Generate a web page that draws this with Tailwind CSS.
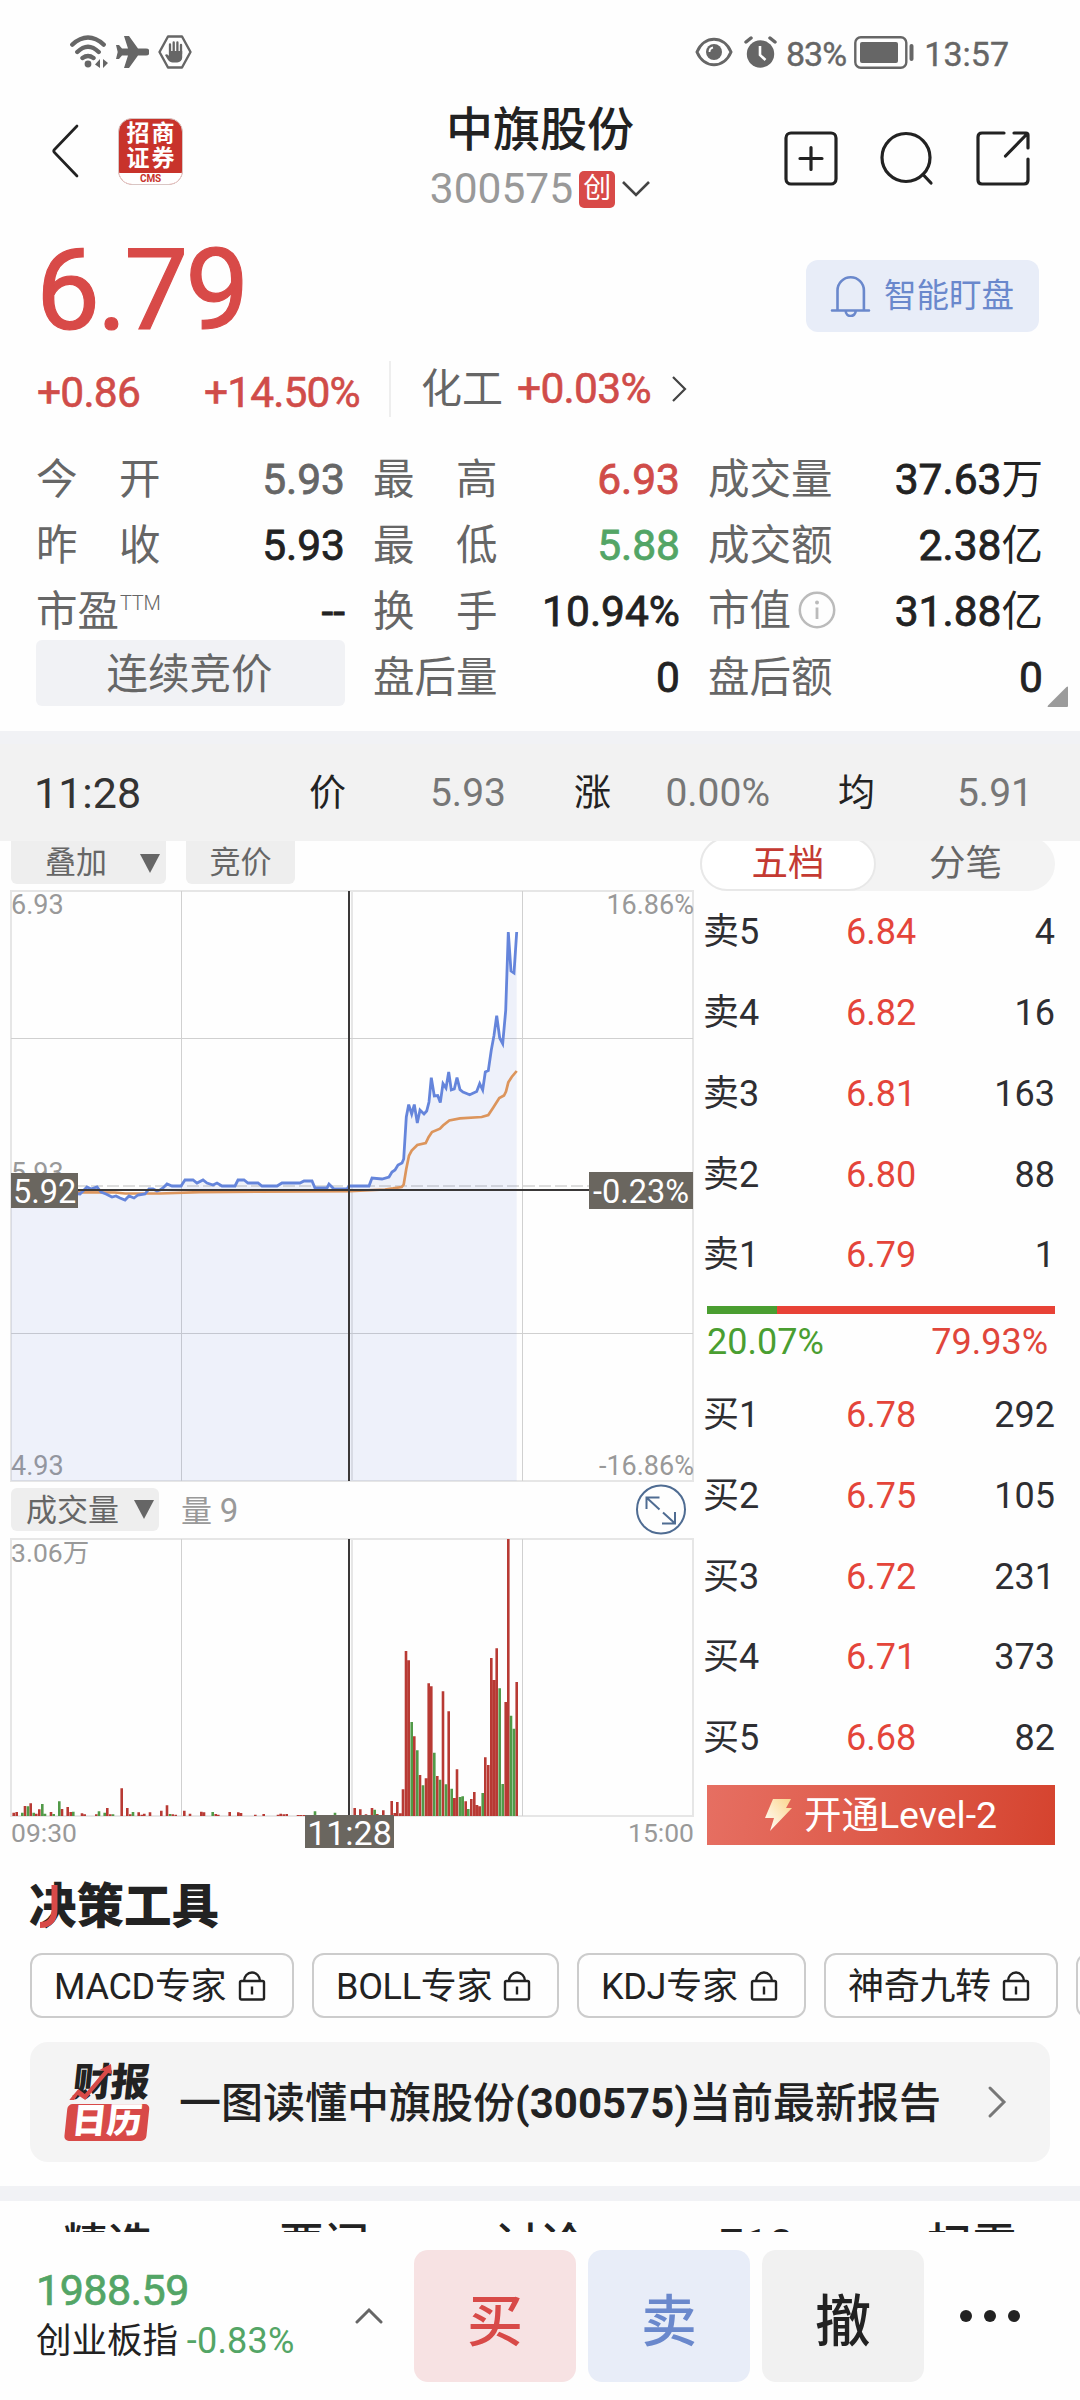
<!DOCTYPE html>
<html lang="zh-CN">
<head>
<meta charset="utf-8">
<title>中旗股份 300575</title>
<script src="https://cdn.jsdelivr.net/npm/@tailwindcss/browser@4"></script>
</head>
<body class="w-[1080px] h-[2400px] overflow-hidden bg-[#fefefe] text-[#222] flex flex-col [font-family:Roboto,'Noto_Sans_CJK_SC',sans-serif]">

<!-- Status bar -->
<div class="h-[104px] shrink-0 flex items-center justify-between pl-[70px] pr-[71px] text-[#666]">
  <div class="flex items-center">
    <svg class="w-[38px] h-[34px]" viewBox="0 0 38 34" fill="none" stroke="#666" stroke-width="4.4" stroke-linecap="round"><path d="M2.3 9.6Q18 -4.5 33.700 9.600M7.300 17Q18 6.500 28.700 17M12.500 23Q18 19 23.500 23"/><circle cx="18" cy="29" r="3.400" fill="#666" stroke="none"/><path d="M30 24v9l-5-3.500zM33 24v9l5-5z" fill="#666" stroke="none"/></svg>
    <svg class="ml-2 w-[33px] h-[32px]" viewBox="0 0 33 32" fill="#666"><path d="M8 0h5l9 12.500h8a3.500 3.500 0 0 1 0 7h-8L13 32H8l4-12.500H6L3 23H0l1.700-7L0 9h3l3 3.500h6z"/></svg>
    <svg class="ml-[9px] w-[34px] h-[34px]" viewBox="0 0 34 34"><path d="M10 1.500h14L32.500 17 24 32.500H10L1.500 17z" fill="none" stroke="#666" stroke-width="2.400" stroke-linejoin="round"/><path d="M12 20V9.500M15.700 18V7.500M19.400 18V7.500M23 19V10" stroke="#666" stroke-width="2.300" stroke-linecap="round"/><path d="M11 16h13.200v6.500a5 5 0 0 1-5 5h-4.500c-4 0-5.700-4.500-7.700-7.500 1.500-1.600 3-.5 4 1z" fill="#666"/></svg>
  </div>
  <div class="flex items-center text-[34px] leading-none [-webkit-text-stroke:0.4px]">
    <svg class="w-[38px] h-[30px]" viewBox="0 0 38 30"><path d="M2 15C9-2 29-2 36 15 29 32 9 32 2 15z" fill="none" stroke="#666" stroke-width="3"/><circle cx="19" cy="15" r="8" fill="#666"/><path d="M14.500 15a4.500 4.500 0 0 1 3.500-4.500" stroke="#fff" stroke-width="1.800" fill="none"/></svg>
    <svg class="ml-[11px] w-[33px] h-[32px]" viewBox="0 0 33 32"><circle cx="16.500" cy="18" r="13.700" fill="#666"/><path d="M2 6l5-4M31 6l-5-4" stroke="#666" stroke-width="3.500" stroke-linecap="round"/><path d="M16 10v9l5.500 5" fill="none" stroke="#fff" stroke-width="2.600"/></svg>
    <span class="ml-[9px] mt-[3px] tracking-[-0.900px]">83%</span>
    <svg class="ml-[8px] w-[61px] h-[33px]" viewBox="0 0 61 33"><rect x="1.300" y="1.300" width="51" height="30.400" rx="5.500" fill="none" stroke="#666" stroke-width="2.400"/><rect x="6" y="6" width="38" height="21" rx="2" fill="#666"/><path d="M57.500 10v13" stroke="#666" stroke-width="4" stroke-linecap="round"/></svg>
    <span class="ml-[9px] mt-[3px]">13:57</span>
  </div>
</div>

<!-- Title bar -->
<header class="h-[106px] shrink-0 grid grid-cols-[1fr_auto_1fr]">
  <div class="flex items-center pl-[50px] pb-[15px]">
    <svg class="w-[30px] h-[56px]" viewBox="0 0 30 56" fill="none" stroke="#222" stroke-width="2.700" stroke-linecap="round" stroke-linejoin="round"><path d="M27 3L4.500 26.500q-1.500 1.500 0 3L27 53"/></svg>
    <div class="ml-[38px] w-[65px] h-[67px] rounded-[14px] overflow-hidden bg-[#c8332b] border border-[#d9c6c4] flex flex-col text-center text-white font-bold">
      <div class="h-[54px] shrink-0 pt-[2px] text-[23px] leading-[25px] tracking-[2px] pl-[2px]">招商<br>证券</div>
      <div class="grow bg-white text-[#c8332b] text-[10px] leading-[11px] tracking-[-0.200px]">CMS</div>
    </div>
  </div>
  <div class="flex flex-col items-center">
    <h1 class="mt-px text-[47px] leading-[50px] font-medium">中旗股份</h1>
    <div class="mt-[10px] flex items-center text-[42.500px] leading-[48px] text-[#999]">
      <span>300575</span>
      <span class="ml-[6px] w-[36px] h-[37px] rounded-[5px] bg-[#d84a48] text-white text-[28px] leading-[36px] text-center">创</span>
      <svg class="ml-[7px] w-[28px] h-[18px]" viewBox="0 0 28 18" fill="none" stroke="#444" stroke-width="2.600"><path d="M1 2l13 13L27 2"/></svg>
    </div>
  </div>
  <div class="flex items-center justify-end gap-[42px] pr-[50px]">
    <svg class="w-[54px] h-[55px]" viewBox="0 0 54 55" fill="none" stroke="#222" stroke-width="3.200" stroke-linecap="round"><rect x="2" y="2" width="50" height="51" rx="5"/><path d="M27 16.500v22M16 27.500h22"/></svg>
    <svg class="w-[54px] h-[55px]" viewBox="0 0 54 55" fill="none" stroke="#222" stroke-width="3.200" stroke-linecap="round"><circle cx="26" cy="26.500" r="24"/><path d="M43 43.500l8 8.500"/></svg>
    <svg class="w-[54px] h-[55px]" viewBox="0 0 54 55" fill="none" stroke="#222" stroke-width="3.200" stroke-linecap="round" stroke-linejoin="round"><path d="M28 2H6Q2 2 2 6v43q0 4 4 4h42q4 0 4-4V28"/><path d="M38 2h12q2 0 2 2v13M50 4L29.500 25"/></svg>
  </div>
</header>

<!-- Price -->
<section class="h-[235px] shrink-0 px-[36px] flex flex-col">
  <div class="h-[146px] shrink-0 flex items-center justify-between pt-[13px]">
    <div class="text-[114px] leading-[114px] text-[#d84a48] tracking-[-3px] [-webkit-text-stroke:1.2px]">6.79</div>
    <button class="w-[233px] h-[72px] mt-[13px] mr-[5px] rounded-[12px] bg-[#e8edf8] text-[#6a88cc] flex items-center pl-[24px] text-[32.500px]">
      <svg class="w-[42px] h-[42px] mr-[12px]" viewBox="0 0 42 42" fill="none" stroke="#6a88cc" stroke-width="2.600" stroke-linecap="round"><path d="M2 35.500h37M7.500 35V15.500a13.200 13.200 0 0 1 26.400 0V35M15.700 36a5 5 0 0 0 10 0"/></svg>智能盯盘
    </button>
  </div>
  <div class="flex items-center h-[66px] text-[42.500px] leading-none text-[#d04c49] [-webkit-text-stroke:0.6px]">
    <span class="w-[168px] pl-px pt-[8px] tracking-[-0.800px]">+0.86</span>
    <span class="w-[185px] pt-[8px] tracking-[-0.900px]">+14.50%</span>
    <span class="w-[2px] h-[56px] bg-[#eee]"></span>
    <span class="ml-[30px] text-[41px] [-webkit-text-stroke:0] text-[#666]">化工</span>
    <span class="ml-[14px] tracking-[-0.700px]">+0.03%</span>
    <svg class="ml-[20px] w-[16px] h-[26px]" viewBox="0 0 16 26" fill="none" stroke="#444" stroke-width="2.200"><path d="M2 1l12 12L2 25"/></svg>
  </div>
</section>

<!-- Key figures -->
<section class="relative h-[286px] shrink-0 pl-[36px] pr-[37px] grid grid-cols-[309px_307px_335px] gap-x-[28px] auto-rows-[66px] text-[41.500px] leading-[69px] text-[#666] [&_b]:font-normal [&_b]:text-[42.500px] [&_b]:[-webkit-text-stroke:0.8px] [&_i]:not-italic [&_i]:text-[41.500px] [&_i]:[-webkit-text-stroke:0]">
  <div class="flex justify-between"><span>今　开</span><b>5.93</b></div>
  <div class="flex justify-between"><span>最　高</span><b class="text-[#d04c49]">6.93</b></div>
  <div class="flex justify-between"><span>成交量</span><b class="text-[#222]">37.63<i>万</i></b></div>
  <div class="flex justify-between"><span>昨　收</span><b class="text-[#222]">5.93</b></div>
  <div class="flex justify-between"><span>最　低</span><b class="text-[#53a566]">5.88</b></div>
  <div class="flex justify-between"><span>成交额</span><b class="text-[#222]">2.38<i>亿</i></b></div>
  <div class="flex justify-between"><span class="flex">市盈<span class="ml-px text-[20px] leading-[53px] font-light tracking-[-0.300px]">TTM</span></span><b class="text-[#222]">--</b></div>
  <div class="flex justify-between"><span>换　手</span><b class="text-[#222]">10.94%</b></div>
  <div class="flex justify-between"><span class="flex items-center">市值<svg class="ml-[7px] w-[38px] h-[38px]" viewBox="0 0 38 38" fill="none" stroke="#bbb" stroke-width="2.500"><circle cx="19" cy="19" r="17.200"/><path d="M19 16.500v11.500" stroke-width="2.800"/><circle cx="19" cy="11.500" r="2" fill="#bbb" stroke="none"/></svg></span><b class="text-[#222]">31.88<i>亿</i></b></div>
  <div class="h-[66px] -mt-[3px] bg-[#f1f2f5] rounded-[6px] text-center -indent-[2px]">连续竞价</div>
  <div class="flex justify-between"><span>盘后量</span><b class="text-[#222]">0</b></div>
  <div class="flex justify-between"><span>盘后额</span><b class="text-[#222]">0</b></div>
  <svg class="absolute left-[1047px] top-[241px] w-[21px] h-[21px]" viewBox="0 0 21 21"><path d="M21 1v19q0 1-1 1H1q-1 0 0-1.500L19.500 1q1.500-1 1.500 0z" fill="#9b9b9b"/></svg>
</section>

<!-- Crosshair readout -->
<section class="h-[110px] shrink-0 bg-[#f2f2f2] border-t-[13px] border-[#f1f2f5] flex items-center pt-[2px] pl-[34px] pr-[47px] text-[39px] text-[#777] leading-none">
  <span class="w-[275px] text-[43px] text-[#333]">11:28</span>
  <span class="w-[37px] text-[37px] text-[#222]">价</span>
  <span class="w-[160px] text-right">5.93</span>
  <span class="ml-[68px] text-[37px] text-[#222]">涨</span>
  <span class="w-[159px] text-right">0.00%</span>
  <span class="ml-[68px] text-[37px] text-[#222]">均</span>
  <span class="grow text-right">5.91</span>
</section>

<!-- Chart and order book -->
<main class="h-[1019px] shrink-0 flex">
  <div class="w-[695px] shrink-0 flex flex-col">
    <div class="h-[48px] shrink-0 pl-[11px] flex gap-5 text-[31px] leading-[44px] text-[#666]">
      <div class="w-[155px] h-[43px] rounded-b-[6px] bg-[#eee] flex items-center pl-[34px] pt-px">叠加<svg class="ml-[33px] w-[20px] h-[19px]" viewBox="0 0 20 19"><path d="M0 0h20L10 19z" fill="#666"/></svg></div>
      <div class="w-[109px] h-[43px] rounded-b-[6px] bg-[#eee] text-center">竞价</div>
    </div>
    <svg class="w-[695px] h-[594px] shrink-0" viewBox="0 889 695 594" font-size="27" fill="#999">
      <g fill="none" stroke="#e6e6e6" stroke-width="2"><rect x="11" y="891" width="682" height="590"/><path d="M352 891v590"/></g>
      <path d="M11 1038.500h682M11 1333.500h682M181.500 891v590M522.500 891v590" fill="none" stroke="#d0d0d0"/>
      <path d="M11 1186h682" stroke="#ddd" stroke-width="2" stroke-dasharray="12 4"/>
      <text x="11" y="914">6.93</text><text x="11" y="1182">5.93</text><text x="11" y="1475">4.93</text>
      <text x="694" y="914" text-anchor="end">16.86%</text><text x="694" y="1475" text-anchor="end">-16.86%</text>
      <path id="area" fill="#6482dc" fill-opacity=".1"/>
      <path id="avg" fill="none" stroke="#dc955c" stroke-width="2.700"/>
      <path id="price" fill="none" stroke="#6585db" stroke-width="2.800"/>
      <path d="M349 891v590M11 1190h682" stroke="#3a3838" stroke-width="2"/>
      <path d="M11 1173h67v35H11zM589 1172h104v37H589z" fill="#6a665f"/>
      <g fill="#fff" font-size="32.500"><text x="13" y="1202.500">5.92</text><text x="641" y="1203" text-anchor="middle">-0.23%</text></g>
    </svg>
    <div class="h-[54px] shrink-0 pl-[11px] pt-[5px] flex text-[31px] leading-[46px] text-[#999]">
      <div class="w-[148px] h-[43px] rounded-[6px] bg-[#eee] flex items-center pl-[15px] text-[#666]"><span class="pt-[2px]">成交量</span><svg class="ml-[15px] w-[20px] h-[19px]" viewBox="0 0 20 19"><path d="M0 0h20L10 19z" fill="#666"/></svg></div>
      <span class="ml-[22px]">量 <span class="text-[33px]">9</span></span>
      <svg class="ml-auto mr-[9px] -mt-[4px] w-[50px] h-[51px]" viewBox="0 0 50 51" fill="none" stroke="#4f6c92" stroke-width="2"><circle cx="25" cy="25.500" r="24"/><path d="M10.500 25V13.500H23.500M11 14l12.500 11.500M39 28v11.500H26M38.500 39L27 28.500"/></svg>
    </div>
    <svg class="w-[695px] h-[321px] shrink-0" viewBox="0 1537 695 321" font-size="26.500" fill="#999">
      <g fill="none" stroke="#e6e6e6" stroke-width="2"><rect x="11" y="1539" width="682" height="277"/><path d="M352 1539v277"/></g>
      <path d="M181.500 1539v277M522.500 1539v277" stroke="#d0d0d0"/>
      <text x="11" y="1562">3.06万</text>
      <path id="up" stroke="#b83a34" stroke-width="2.600"/>
      <path id="down" stroke="#519a48" stroke-width="2.600"/>
      <path d="M349 1539v277" stroke="#3a3838" stroke-width="2"/>
      <text x="11" y="1841.500">09:30</text><text x="694" y="1841.500" text-anchor="end">15:00</text>
      <path d="M305 1815h89v33h-89z" fill="#6a665f"/>
      <text x="349.500" y="1844.500" text-anchor="middle" font-size="34" fill="#fff">11:28</text>
    </svg>
  </div>

  <div class="ml-[10px] w-[350px] flex flex-col text-[36px]">
    <div class="-ml-[5px] -mt-[4px] w-[355px] h-[54px] shrink-0 rounded-full bg-[#f3f3f3] [clip-path:inset(4px_0_0_0)] flex text-[36.500px] leading-[50px] text-center">
      <span class="w-[176px] rounded-full border-2 border-[#e8e8e8] bg-white text-[#c43a32]">五档</span>
      <span class="w-[179px] leading-[54px] text-[#666]">分笔</span>
    </div>
    <div id="asks" class="mt-px flex flex-col"></div>
    <div class="ml-[2px] mt-[10px] h-[8px] flex shrink-0"><span class="w-[70px] bg-[#4a9e31]"></span><span class="grow bg-[#e84236]"></span></div>
    <div class="ml-[2px] h-[54px] pr-[7px] flex shrink-0 justify-between leading-[56px]"><span class="text-[#4a9e31]">20.07%</span><span class="text-[#e0463b]">79.93%</span></div>
    <div id="bids" class="mt-[7px] flex flex-col"></div>
    <div class="ml-[2px] mt-[6px] h-[60px] shrink-0 flex items-center justify-center bg-linear-100 from-[#e66f62] to-[#d5432e] text-white text-[37.500px] leading-none">
      <svg class="mr-[12px] w-[27px] h-[32px]" viewBox="0 0 27 32"><defs><linearGradient id="bolt" x1="1" y1="0" x2="0" y2="1"><stop offset="0" stop-color="#fbd58c"/><stop offset="1" stop-color="#fff"/></linearGradient></defs><path d="M8 0h18l-5 9h6L5 32l4-13H0z" fill="url(#bolt)"/></svg><span class="pt-[3px]">开通Level-2</span>
    </div>
  </div>
</main>

<!-- Decision tools -->
<section class="h-[326px] shrink-0 pl-[29px] pt-[18px]">
  <div class="relative w-max text-[47.500px] leading-[58px] font-black">决策工具
    <svg class="absolute left-[10px] top-[6px] w-[20px] h-[46px]" viewBox="0 0 20 46" fill="none" stroke="#d84a48" stroke-width="6"><path d="M15.500 1v24q0 16-14.500 16"/></svg>
  </div>
  <div id="chips" class="ml-px mt-[17px] flex gap-[18px] w-[1050px] overflow-hidden text-[36px] leading-[65px]"></div>
  <div class="ml-px mt-[24px] w-[1020px] h-[120px] rounded-[18px] bg-[#f4f4f4] flex items-center pl-[38px] text-[42px] font-medium">
    <div class="relative w-[82px] h-[80px] font-black text-center -skew-x-6">
      <div class="text-[39px] leading-[42px] tracking-[-1px]">财报</div>
      <div class="h-[37px] rounded-[5px] bg-[#d84a48] text-white text-[35px] leading-[36px]">日历</div>
      <svg class="absolute left-[1px] top-[2px] w-[42px] h-[38px]" viewBox="0 0 42 38" fill="#d84a48"><path d="M0 36l8-11 7 5L32 7l-5-1L38 0l2 10-4-1-20 27-8-5-3 5z"/></svg>
    </div>
    <span class="ml-[29px] pt-[3px] leading-none whitespace-nowrap">一图读懂中旗股份<b>(300575)</b>当前最新报告</span>
    <svg class="ml-[46px] shrink-0 w-[20px] h-[34px]" viewBox="0 0 20 34" fill="none" stroke="#777" stroke-width="3" stroke-linecap="round"><path d="M3 3l14 14L3 31"/></svg>
  </div>
</section>

<div class="h-[15px] shrink-0 bg-[#f1f2f5]"></div>
<nav class="h-[30.500px] shrink-0 overflow-hidden grid grid-cols-5 pt-[17px] text-[45px] leading-[56px] font-medium text-center">
  <span>精选</span><span>要闻</span><span>讨论</span><span>F10</span><span>扫雷</span>
</nav>

<!-- Trade bar -->
<footer class="grow flex pl-[36px] pt-[18.500px] bg-[#fefefe]">
  <div class="w-[318px] pt-[16px]">
    <div class="text-[43px] leading-[48px] text-[#53a566] tracking-[-0.500px] [-webkit-text-stroke:0.7px]">1988.59</div>
    <div class="mt-[3px] text-[35.500px] leading-[49px] whitespace-nowrap">创业板指 <span class="text-[36px] text-[#53a566] tracking-[0.200px]">-0.83%</span></div>
  </div>
  <svg class="mt-[57px] w-[30px] h-[17px]" viewBox="0 0 30 17" fill="none" stroke="#666" stroke-width="3" stroke-linecap="round"><path d="M3 15L15 3l12 12"/></svg>
  <div class="ml-[30px] flex gap-[12px] text-[56px] leading-[132px] font-medium text-center">
    <button class="w-[162px] h-[132px] pt-[6px] rounded-[14px] bg-[#f7e2e3] text-[#d84a48]">买</button>
    <button class="w-[162px] h-[132px] pt-[6px] rounded-[14px] bg-[#e8edf8] text-[#6a88cc]">卖</button>
    <button class="w-[162px] h-[132px] pt-[6px] rounded-[14px] bg-[#f1f1f1]">撤</button>
  </div>
  <svg class="ml-[36px] mt-[60px] w-[60px] h-[12px]" viewBox="0 0 60 12" fill="#222"><circle cx="6" cy="6" r="6"/><circle cx="30" cy="6" r="6"/><circle cx="54" cy="6" r="6"/></svg>
</footer>

<script>
const $ = id => document.getElementById(id);

// Minute line and average line, in chart coordinates
const price = '11,1188 40,1187 60,1192 80,1194 87,1187 91,1189 97,1187 101,1192 106,1194 112,1197 116,1196 120,1198 125,1200 129,1196 134,1198 138,1195 145,1194 149,1189 153,1189 157,1191 160,1190 163,1188 167,1184 172,1186 181,1186 185,1180 193,1180 197,1183 203,1180 207,1183 213,1185 217,1183 222,1186 235,1186 238,1180 244,1180 248,1183 258,1183 262,1186 277,1186 282,1183 300,1183 304,1181 312,1181 315,1188 327,1188 329,1184 334,1189 347,1189 349,1186 369,1186 372,1178 382,1179 389,1177 392,1172 395,1170 398,1165 402,1163 403.7,1159 406.3,1117 408.7,1104.6 411.7,1114 414.3,1104.6 417.3,1123 420,1110 424,1114 426.7,1111 429,1102 431.3,1077.7 434.3,1096 437.7,1095.5 440.3,1102.6 443,1083.6 446,1088 448.7,1072 451.3,1090 454.3,1089 457,1077.7 460,1089.6 463,1092 469.7,1094.7 476.7,1091.5 479.7,1083.6 482.7,1090 485.3,1072 488.3,1070.6 491.3,1050 494,1035.4 496.7,1015.6 499.7,1038 502.7,1043.7 505.7,1010.5 508.3,932 511,971 514,973 516.7,932';
const avg = '11,1190 60,1192 80,1192.3 115,1192.5 125,1193.5 160,1193.5 200,1192.2 260,1191.6 350,1191.2 385,1189.5 393,1188.4 401.7,1187 403.7,1184.5 406.3,1168.7 409,1155.6 411.7,1150.5 417.3,1145 425.7,1143 428.7,1137 432,1132 440,1128.7 443,1125.5 449.3,1120.4 460,1118.4 481.7,1117 488.3,1115 493.3,1107.4 499.3,1098 504,1095.5 506,1091.5 508.3,1082.4 511.7,1077 516.7,1071';
$('price').setAttribute('d', 'M' + price);
$('avg').setAttribute('d', 'M' + avg);
$('area').setAttribute('d', 'M' + price + 'V1481H11z');

// Volume bars: minute offset in thirds of a pixel, bar height, g = falling
const vol = '41,10 50,12 67,10g 75,30 84,29g 92,38 101,10g 109,7 118,20 127,36g 135,7g 153,12 161,6g 178,44g 186,21 203,27 212,12 220,13g 246,8 254,5 289,5 297,14g 314,10g 322,24 331,5 339,5g 365,83 382,24 391,5 399,12g 416,11 425,4 433,7 450,11 484,16 501,32 510,6g 518,5 527,4 553,16 570,7 604,13 612,11 638,12g 647,6 655,4 689,12 715,11 723,9 766,4 791,6 834,4 842,7 851,5 860,6 894,3 902,3 911,3 945,14g 1005,10g 1064,24 1081,20 1098,5 1116,24 1124,19g 1132,6 1150,17 1175,45 1184,9 1192,42 1201,8 1209,80 1218,495 1226,467 1235,282g 1243,239 1252,197g 1260,123 1269,92g 1278,113 1286,398 1294,389 1303,190g 1312,120 1320,109g 1329,374 1338,95g 1346,314 1355,82g 1363,54 1371,140 1380,57g 1388,59g 1397,44 1405,21g 1414,51 1423,72 1431,33 1439,29 1448,69g 1456,176 1465,153 1474,474 1482,408 1490,503 1499,383g 1508,96g 1517,342 1525,831 1533,301g 1542,262g 1550,402';
const bars = {up: '', down: ''};
for (const v of vol.split(' ')) {
  const [x, h] = v.split(',');
  bars[h.endsWith('g') ? 'down' : 'up'] += `M${(x / 3).toFixed(1)} 1816v${-(parseInt(h) / 3).toFixed(1)}`;
}
$('up').setAttribute('d', bars.up);
$('down').setAttribute('d', bars.down);

const row = ([n, p, q]) => `<div class="h-[80.750px] shrink-0 flex items-center leading-none text-[#2e2e32]"><span class="w-[141px] -indent-[2px]">${n}</span><span class="w-[80px] text-[#e4453a]">${p}</span><span class="grow text-right">${q}</span></div>`;
$('asks').innerHTML = [['卖5','6.84',4],['卖4','6.82',16],['卖3','6.81',163],['卖2','6.80',88],['卖1','6.79',1]].map(row).join('');
$('bids').innerHTML = [['买1','6.78',292],['买2','6.75',105],['买3','6.72',231],['买4','6.71',373],['买5','6.68',82]].map(row).join('');

const lock = '<svg class="w-[28px] h-[30px]" viewBox="0 0 28 30" fill="none" stroke="#222" stroke-width="2.400"><rect x="2" y="10" width="24" height="18.500" rx="1.500"/><path d="M6 10a8 8.500 0 0 1 16 0M14 15.500v8"/></svg>';
$('chips').innerHTML = [['MACD专家','w-[264px]'],['BOLL专家','w-[247px]'],['KDJ专家','w-[229px]'],['神奇九转','w-[234px]'],['','w-[200px]']].map(([t, w]) => `<div class="${w} h-[65px] shrink-0 rounded-[12px] border-2 border-[#ccc] flex items-center justify-between pl-[22px] pr-[26px] tracking-[-0.300px]"><span class="pt-[3px]">${t}</span>${t && lock}</div>`).join('');
</script>
</body>
</html>
